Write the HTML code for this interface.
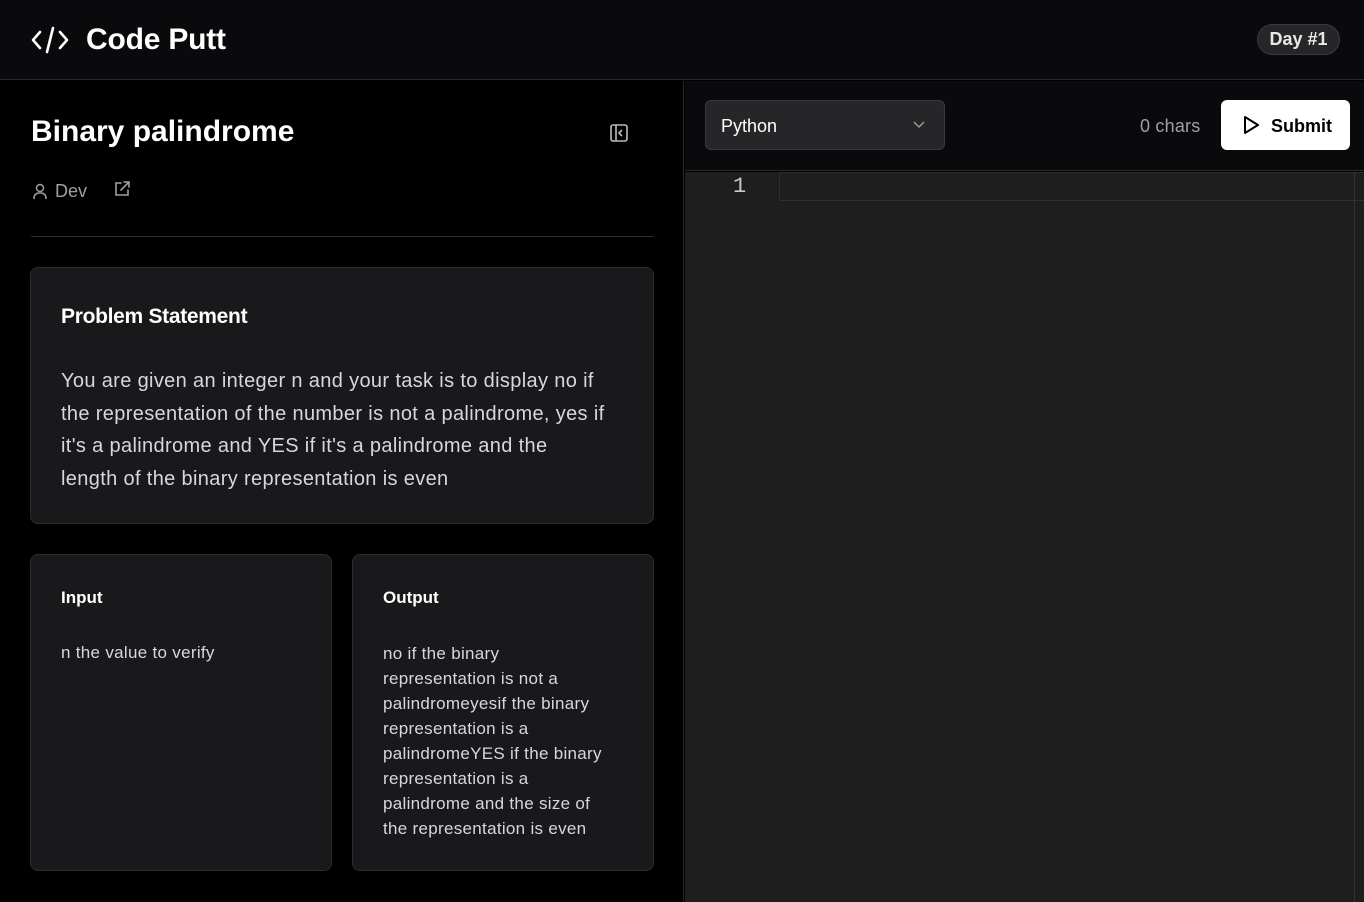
<!DOCTYPE html>
<html><head><meta charset="utf-8"><style>
*{margin:0;padding:0;box-sizing:border-box}
body{width:1364px;height:902px;overflow:hidden;background:#000;font-family:"Liberation Sans",sans-serif;color:#fff;position:relative}
.hdr{position:absolute;left:0;top:0;width:1364px;height:80px;background:#0a0a0c;border-bottom:1px solid #2a2a2c}
.logo{position:absolute;left:31px;top:26px}
.title{position:absolute;left:86px;top:23px;font-size:30px;font-weight:bold;letter-spacing:-0.2px}
.day{position:absolute;left:1257px;top:24px;width:83px;height:31px;border:1px solid #3a3a3c;background:#262628;border-radius:16px;font-size:18px;font-weight:bold;text-align:center;line-height:29px;color:#e8e8e8}
.left{position:absolute;left:0;top:81px;width:684px;height:821px;background:#000;border-right:1px solid #2a2a2c}
h1{position:absolute;left:31px;top:115px;font-size:30px;font-weight:bold;letter-spacing:0px}
.meta{position:absolute;left:31px;top:181px;font-size:18px;color:#a0a0a4}
.sep{position:absolute;left:31px;top:236px;width:623px;height:1px;background:#2e2e30}
.card{position:absolute;background:#19191b;border:1px solid #2c2c2e;border-radius:8px}
.card h2{position:absolute;left:30px;font-size:21px;font-weight:bold;letter-spacing:-0.3px}
.card h3{position:absolute;left:30px;top:33px;font-size:17px;font-weight:bold}
.txt{position:absolute;left:30px;color:#d8d8dc;white-space:nowrap}
.right{position:absolute;left:685px;top:81px;width:679px;height:90px;background:#0a0a0c;border-bottom:1px solid #2a2a2c}
.sel{position:absolute;left:705px;top:100px;width:240px;height:50px;background:#262628;border:1px solid #3a3a3c;border-radius:6px;font-size:18px;padding:15px 15px}
.chars{position:absolute;left:1140px;top:116px;font-size:18px;color:#a0a0a4;letter-spacing:0.2px}
.sub{position:absolute;left:1221px;top:100px;width:129px;height:50px;background:#fff;border-radius:6px;color:#000;font-size:18px;font-weight:bold}
.editor{position:absolute;left:685px;top:172px;width:679px;height:730px;background:#1e1e1e}
.line{position:absolute;left:779px;top:172px;width:585px;height:29px;border:1px solid #2e2e2e;border-right:none}
.ln{position:absolute;left:733px;top:174px;font-family:"Liberation Mono",monospace;font-size:22px;color:#c8c8c8}
</style></head><body>
<div class="hdr">
<svg class="logo" width="38" height="28" viewBox="0 0 38 28" fill="none" stroke="#fff" stroke-width="2.6" stroke-linecap="round" stroke-linejoin="round"><path d="M9 6 2 14l7 8M29 6l7 8-7 8M22 2 16 26"/></svg>
<div class="title">Code Putt</div>
<div class="day">Day #1</div>
</div>
<div class="left"></div>
<h1>Binary palindrome</h1>
<svg style="position:absolute;left:610px;top:124px" width="18" height="18" viewBox="0 0 18 18" fill="none" stroke="#bbb" stroke-width="1.6"><rect x="1" y="1" width="16" height="16" rx="2"/><path d="M6 1v16M12 6l-3 3 3 3"/></svg>
<div class="meta"><svg style="position:absolute;left:0;top:1px" width="18" height="18" viewBox="0 0 18 18" fill="none" stroke="#a0a0a4" stroke-width="1.5"><circle cx="9" cy="6" r="3.5"/><path d="M3 17v-1a5 5 0 0 1 5-5h2a5 5 0 0 1 5 5v1"/></svg><span style="margin-left:24px">Dev</span><svg style="position:absolute;left:82px;top:-1px" width="18" height="18" viewBox="0 0 18 18" fill="none" stroke="#a0a0a4" stroke-width="1.6" stroke-linecap="round"><path d="M8 3H3v12h12v-5M11 2h5v5M16 2 8 10"/></svg></div>
<div class="sep"></div>
<div class="card" style="left:30px;top:267px;width:624px;height:257px">
<h2 style="top:37px">Problem Statement</h2>
<div class="txt" style="top:97px;font-size:20px;line-height:32.5px;letter-spacing:0.35px">You are given an integer n and your task is to display no if<br>the representation of the number is not a palindrome, yes if<br>it's a palindrome and YES if it's a palindrome and the<br>length of the binary representation is even</div>
</div>
<div class="card" style="left:30px;top:554px;width:302px;height:317px">
<h3>Input</h3>
<div class="txt" style="top:88px;font-size:17px;letter-spacing:0.3px">n the value to verify</div>
</div>
<div class="card" style="left:352px;top:554px;width:302px;height:317px">
<h3>Output</h3>
<div class="txt" style="top:86px;font-size:17px;line-height:25px;letter-spacing:0.3px">no if the binary<br>representation is not a<br>palindromeyesif the binary<br>representation is a<br>palindromeYES if the binary<br>representation is a<br>palindrome and the size of<br>the representation is even</div>
</div>
<div class="right"></div>
<div class="sel">Python<svg style="position:absolute;left:207px;top:20px" width="12" height="8" viewBox="0 0 12 8" fill="none" stroke="#999" stroke-width="1.5"><path d="M1 1l5 5 5-5"/></svg></div>
<div class="chars">0 chars</div>
<div class="sub"><svg style="position:absolute;left:22px;top:16px" width="16" height="18" viewBox="0 0 16 18" fill="none" stroke="#000" stroke-width="2" stroke-linejoin="round"><path d="M2 1v16l13-8z"/></svg><span style="position:absolute;left:50px;top:16px">Submit</span></div>
<div class="editor"></div>
<div class="line"></div>
<div class="ln">1</div>
<div style="position:absolute;left:1354px;top:172px;width:1px;height:730px;background:#333"></div>
</body></html>
